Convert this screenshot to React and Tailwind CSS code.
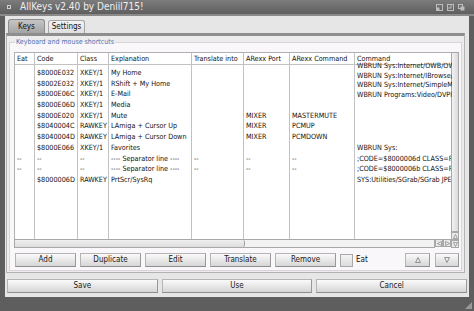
import React from 'react';

const rows = [
  { eat: '', code: '$8000E032', cls: 'XKEY/1', expl: 'My Home', tr: '', port: '', arexx: '', cmd: 'WBRUN Sys:Internet/OWB/OWB', shift: 'relative -top-[7px]' },
  { eat: '', code: '$8002E032', cls: 'XKEY/1', expl: 'RShift + My Home', tr: '', port: '', arexx: '', cmd: 'WBRUN Sys:Internet/IBrowse/IBrowse', shift: 'relative -top-[8px]' },
  { eat: '', code: '$8000E06C', cls: 'XKEY/1', expl: 'E-Mail', tr: '', port: '', arexx: '', cmd: 'WBRUN Sys:Internet/SimpleMail/SimpleMail', shift: 'relative -top-[9px]' },
  { eat: '', code: '$8000E06D', cls: 'XKEY/1', expl: 'Media', tr: '', port: '', arexx: '', cmd: 'WBRUN Programs:Video/DVPlayer', shift: 'relative -top-[10px]' },
  { eat: '', code: '$8000E020', cls: 'XKEY/1', expl: 'Mute', tr: '', port: 'MIXER', arexx: 'MASTERMUTE', cmd: '' },
  { eat: '', code: '$8040004C', cls: 'RAWKEY', expl: 'LAmiga + Cursor Up', tr: '', port: 'MIXER', arexx: 'PCMUP', cmd: '' },
  { eat: '', code: '$8040004D', cls: 'RAWKEY', expl: 'LAmiga + Cursor Down', tr: '', port: 'MIXER', arexx: 'PCMDOWN', cmd: '' },
  { eat: '', code: '$8000E066', cls: 'XKEY/1', expl: 'Favorites', tr: '', port: '', arexx: '', cmd: 'WBRUN Sys:' },
  { eat: '--', code: '--', cls: '--', expl: '---- Separator line ----', tr: '--', port: '--', arexx: '--', cmd: ';CODE=$8000006d CLASS=RAWKEY' },
  { eat: '--', code: '--', cls: '--', expl: '---- Separator line ----', tr: '--', port: '--', arexx: '--', cmd: ';CODE=$8000006b CLASS=RAWKEY' },
  { eat: '', code: '$8000006D', cls: 'RAWKEY', expl: 'PrtScr/SysRq', tr: '', port: '', arexx: '', cmd: 'SYS:Utilities/SGrab/SGrab JPEG' },
];

const headers = ['Eat', 'Code', 'Class', 'Explanation', 'Translate into', 'ARexx Port', 'ARexx Command', 'Command'];

const grid = 'grid grid-cols-[20px_43px_31px_83px_52px_46px_65px_97px]';
const cell = 'border-r border-[#c2c2c2] pl-[2px] whitespace-nowrap overflow-x-clip';
const lastCell = 'pl-[2px] whitespace-nowrap overflow-x-clip';
const btn = 'h-[14px] flex items-center justify-center border border-[#b4b4b4] border-b-[#8e8e8e] border-r-[#999] bg-gradient-to-b from-[#fafafa] to-[#d6d6d6] text-[8px] leading-none text-[#202020]';

const Tri = ({ down, left, right, size = 6, color = '#8a8a8a' }) => {
  let pts = '0.5,5.5 3,0.5 5.5,5.5';
  if (down) pts = '0.5,0.5 3,5.5 5.5,0.5';
  if (left) pts = '5.5,0.5 0.5,3 5.5,5.5';
  if (right) pts = '0.5,0.5 5.5,3 0.5,5.5';
  return (
    <svg width={size} height={size} viewBox="0 0 6 6">
      <polygon points={pts} fill="none" stroke={color} strokeWidth="0.9" />
    </svg>
  );
};

const ArrowBox = (props) => (
  <div className="w-[8px] h-[8px] flex items-center justify-center border border-[#a8a8a8] bg-[#e8e8e8]">
    <Tri {...props} size={5} />
  </div>
);

export default function App() {
  return (
    <div className="w-[474px] h-[311px] overflow-hidden bg-[#5e5e5e] flex flex-col font-['DejaVu_Sans_Condensed','DejaVu_Sans',sans-serif] [font-stretch:semi-condensed] text-[#111]">
      {/* title bar */}
      <div className="h-[16px] flex items-center bg-gradient-to-b from-[#7c7c7c] to-[#5f5f5f] border-b-2 border-[#8a8a8a] pl-[7px] pr-[9px]">
        <div className="w-[4px] h-[4px] border border-[#cfcfcf] mr-[9px]" />
        <span className="text-[10px] leading-none text-[#f0f0f0]">AllKeys v2.40 by Deniil715!</span>
        <div className="ml-auto flex gap-[4px]">
          <svg width="7" height="7" viewBox="0 0 7 7">
            <rect x="0.5" y="0.5" width="6" height="6" fill="none" stroke="#bdbdbd" />
            <rect x="0.5" y="3.5" width="3" height="3" fill="#bdbdbd" />
          </svg>
          <svg width="7" height="7" viewBox="0 0 7 7">
            <rect x="0.5" y="0.5" width="6" height="6" fill="none" stroke="#bdbdbd" />
            <rect x="0.5" y="0.5" width="3.5" height="3.5" fill="none" stroke="#bdbdbd" />
          </svg>
          <svg width="7" height="7" viewBox="0 0 7 7">
            <rect x="0.5" y="0.5" width="4" height="4" fill="none" stroke="#bdbdbd" />
            <rect x="2.5" y="2.5" width="4" height="4" fill="#bdbdbd" />
          </svg>
        </div>
      </div>

      {/* window body */}
      <div className="flex-1 ml-[5px] mr-[5px] bg-[#e6e6e6] flex flex-col">
        {/* tabs */}
        <div className="flex items-end gap-[3px] pt-[3px] pl-[3px] h-[17px]">
          <div className="w-[37px] h-[14px] rounded-t-[3px] border border-b-0 border-[#8c8c8c] bg-gradient-to-b from-[#c6c6c6] to-[#a4a4a4] flex items-center justify-center text-[8px] leading-none">Keys</div>
          <div className="w-[37px] h-[13px] rounded-t-[3px] border border-b-0 border-[#a6a6a6] bg-gradient-to-b from-[#f4f4f4] to-[#dedede] flex items-center justify-center text-[8px] leading-none">Settings</div>
        </div>

        {/* panel */}
        <div className="h-[240px] ml-[1px] mr-[4px] border-t-[3px] border-t-[#8e8e8e] border-x border-b border-[#b2b2b2] bg-[#ececec] flex flex-col px-[2px]">
          <fieldset className="mt-[2px] h-[233px] border border-[#dcd2dc] bg-[#faf7fa] pl-[4px] pr-[1px] pb-[3px] min-w-0">
            <legend className="ml-[1px] px-[1px] text-[7px] leading-[8px] text-[#4f72b4]">Keyboard and mouse shortcuts</legend>
            <div className="mt-[6px] h-[196px] flex">
              <div className="w-[437px] flex flex-col">
                <div className="flex-1 flex flex-col border-l border-t border-[#b0b0b0] bg-white text-[7.2px]">
                  {/* header */}
                  <div className={`${grid} h-[12px] items-stretch border-b border-[#c2c2c2] leading-[11px]`}>
                    {headers.map((h, i) => (
                      <div key={h} className={i === 7 ? lastCell : cell}>{h}</div>
                    ))}
                  </div>
                  <div className={`${grid} h-[3px]`}>
                    {headers.map((h, i) => <div key={h} className={i === 7 ? '' : 'border-r border-[#c2c2c2]'} />)}
                  </div>
                  {rows.map((r, idx) => (
                    <div key={idx} className={`${grid} h-[10.7px] leading-[10.7px]`}>
                      <div className={cell}>{r.eat}</div>
                      <div className={cell}>{r.code}</div>
                      <div className={cell}>{r.cls}</div>
                      <div className={cell}>{r.expl}</div>
                      <div className={cell}>{r.tr}</div>
                      <div className={cell}>{r.port}</div>
                      <div className={cell}>{r.arexx}</div>
                      <div className={lastCell}><span className={r.shift || ''}>{r.cmd}</span></div>
                    </div>
                  ))}
                  {/* filler */}
                  <div className={`${grid} flex-1`}>
                    {headers.map((h, i) => <div key={h} className={i === 7 ? '' : 'border-r border-[#c2c2c2]'} />)}
                  </div>
                </div>
                {/* horizontal scroller */}
                <div className="h-[9px] flex">
                  <div className="flex-1 flex border border-[#a8a8a8] bg-[#f2f2f2]">
                    <div className="w-[230px] h-full bg-gradient-to-b from-[#f0f0f0] to-[#dcdcdc] border-r border-[#a0a0a0] rounded-r-[2px]" />
                  </div>
                  <ArrowBox left />
                  <ArrowBox right />
                </div>
              </div>
              {/* vertical scroller */}
              <div className="w-[8px] flex flex-col">
                <div className="flex-1 border border-[#a8a8a8] bg-gradient-to-r from-[#f2f2f2] to-[#dadada]" />
                <ArrowBox />
                <ArrowBox down />
              </div>
            </div>

            {/* list buttons */}
            <div className="mt-[5px] flex items-center">
              <div className="ml-[1px] flex gap-[4px]">
                <div className={`${btn} w-[61px]`}>Add</div>
                <div className={`${btn} w-[61px]`}>Duplicate</div>
                <div className={`${btn} w-[61px]`}>Edit</div>
                <div className={`${btn} w-[61px]`}>Translate</div>
                <div className={`${btn} w-[61px]`}>Remove</div>
              </div>
              <div className="ml-[4px] w-[13px] h-[13px] border border-[#a8a8a8] bg-gradient-to-b from-[#f4f4f4] to-[#dcdcdc]" />
              <span className="ml-[3px] text-[8px] leading-none">Eat</span>
              <div className="ml-auto mr-[1px] flex gap-[5px]">
                <div className={`${btn} w-[25px]`}><Tri size={6} /></div>
                <div className={`${btn} w-[24px]`}><Tri down size={6} /></div>
              </div>
            </div>
          </fieldset>
        </div>

        {/* main buttons */}
        <div className="mt-[6px] px-[2px] flex gap-[4px]">
          <div className={`${btn} flex-1`}>Save</div>
          <div className={`${btn} flex-1`}>Use</div>
          <div className={`${btn} flex-1`}>Cancel</div>
        </div>
      </div>

      {/* bottom bar */}
      <div className="h-[14px] flex justify-end items-end pr-[2px] pb-[2px]">
        <svg width="7" height="7" viewBox="0 0 7 7">
          <polygon points="7,0 7,7 0,7" fill="#9a9a9a" />
        </svg>
      </div>
    </div>
  );
}
